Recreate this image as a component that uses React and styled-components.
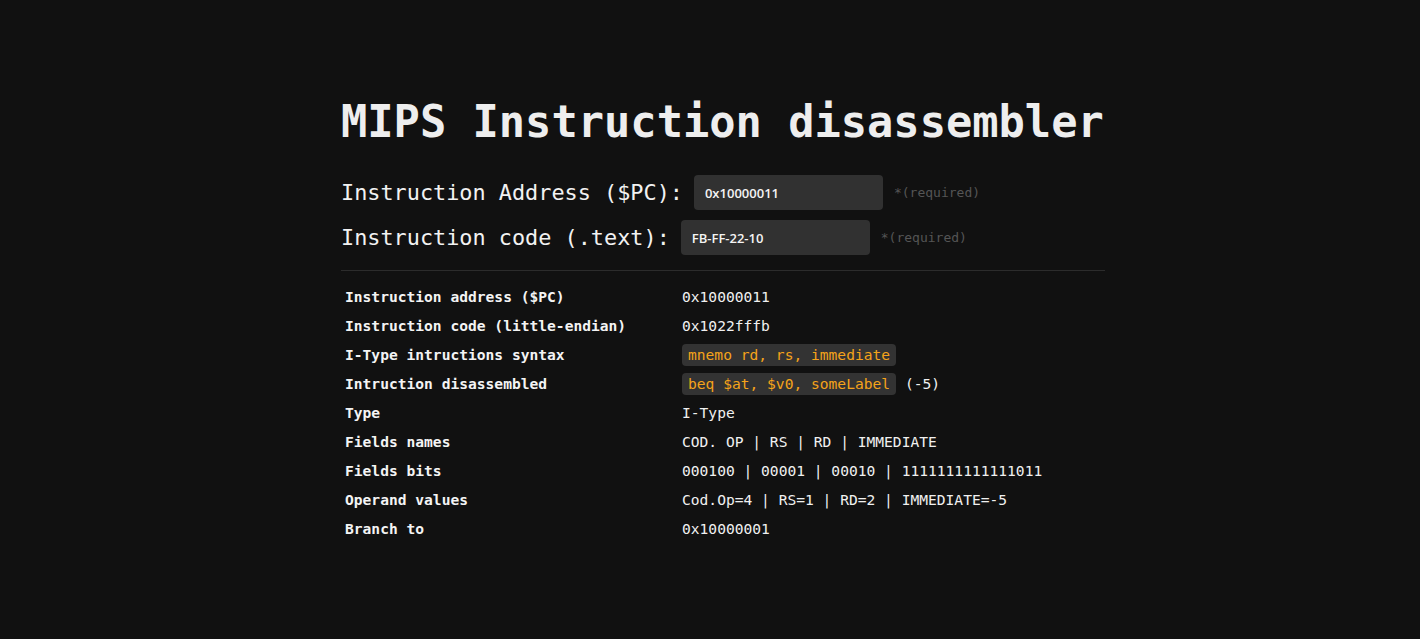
import React from 'react';
import styled, { createGlobalStyle } from 'styled-components';

const GlobalStyle = createGlobalStyle`
  html, body {
    margin: 0;
    padding: 0;
    background: #111111;
    color: #eeeeee;
    font-family: "DejaVu Sans Mono", "Liberation Mono", monospace;
  }
`;

const Page = styled.div`
  min-height: 639px;
  box-sizing: border-box;
  padding-top: 95px;
`;

const Container = styled.div`
  width: 790px;
  margin: 0 auto;
  padding-left: 26px;
  box-sizing: border-box;
`;

const Title = styled.h1`
  margin: 0 0 27px;
  font-size: 43.7px;
  line-height: 53px;
  font-weight: 700;
  color: #eeeeee;
  white-space: nowrap;
`;

const Form = styled.div`
  display: flex;
  flex-direction: column;
  gap: 10px;
`;

const FieldRow = styled.label`
  display: flex;
  align-items: center;
  gap: 11px;
  height: 35px;
`;

const FieldLabel = styled.span`
  font-size: 21.85px;
  color: #f2f2f2;
  white-space: nowrap;
`;

const Input = styled.input`
  width: 189px;
  height: 35px;
  box-sizing: border-box;
  padding: 0 11px;
  border: none;
  border-radius: 4px;
  background: #313131;
  color: #f4f4f4;
  font-family: "Open Sans", "Liberation Sans", Arial, sans-serif;
  font-size: 13px;
  font-weight: 600;
  outline: none;
`;

const Required = styled.span`
  font-size: 13px;
  color: #555555;
`;

const Divider = styled.hr`
  margin: 15px 0 11px;
  border: none;
  border-top: 1px solid #2c2c2c;
  height: 0;
`;

const Table = styled.div`
  display: grid;
  grid-template-columns: 337px 1fr;
  grid-auto-rows: 29px;
  align-items: center;
  font-size: 14.6px;
`;

const Key = styled.div`
  padding-left: 4px;
  font-weight: 700;
  color: #f4f4f4;
  white-space: nowrap;
`;

const Value = styled.div`
  padding-left: 4px;
  color: #f0f0f0;
  white-space: nowrap;
`;

const Code = styled.span`
  display: inline-block;
  padding: 2px 6px;
  line-height: 18px;
  border-radius: 4px;
  background: #333333;
  color: #f5a31a;
`;

const rows = [
  ['Instruction address ($PC)', '0x10000011'],
  ['Instruction code (little-endian)', '0x1022fffb'],
  ['I-Type intructions syntax', <Code>mnemo rd, rs, immediate</Code>],
  [
    'Intruction disassembled',
    <>
      <Code>beq $at, $v0, someLabel</Code> (-5)
    </>,
  ],
  ['Type', 'I-Type'],
  ['Fields names', 'COD. OP | RS | RD | IMMEDIATE'],
  ['Fields bits', '000100 | 00001 | 00010 | 1111111111111011'],
  ['Operand values', 'Cod.Op=4 | RS=1 | RD=2 | IMMEDIATE=-5'],
  ['Branch to', '0x10000001'],
];

export default function App() {
  return (
    <Page>
      <GlobalStyle />
      <Container>
        <Title>MIPS Instruction disassembler</Title>
        <Form>
          <FieldRow>
            <FieldLabel>Instruction Address ($PC):</FieldLabel>
            <Input defaultValue="0x10000011" />
            <Required>*(required)</Required>
          </FieldRow>
          <FieldRow>
            <FieldLabel>Instruction code (.text):</FieldLabel>
            <Input defaultValue="FB-FF-22-10" />
            <Required>*(required)</Required>
          </FieldRow>
        </Form>
        <Divider />
        <Table>
          {rows.map(([k, v]) => (
            <React.Fragment key={k}>
              <Key>{k}</Key>
              <Value>{v}</Value>
            </React.Fragment>
          ))}
        </Table>
      </Container>
    </Page>
  );
}
